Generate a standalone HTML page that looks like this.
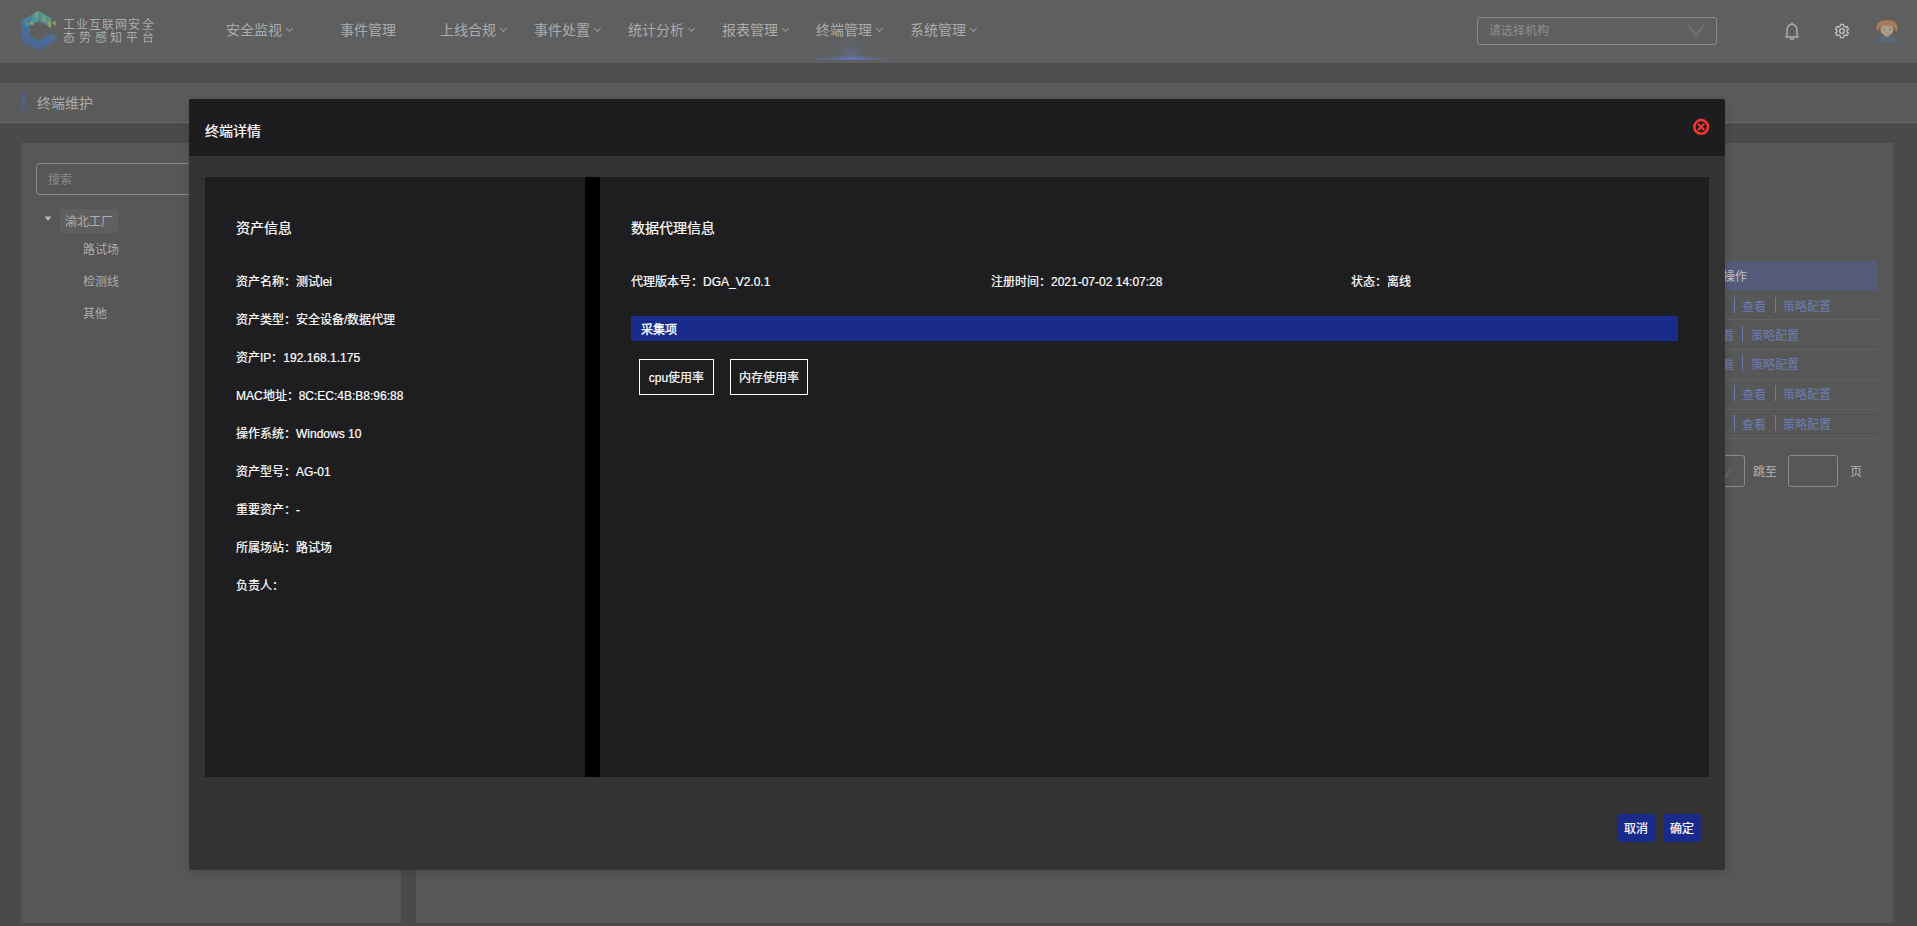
<!DOCTYPE html>
<html lang="zh-CN"><head><meta charset="utf-8">
<style>
*{box-sizing:border-box;margin:0;padding:0}
html,body{width:1917px;height:926px;overflow:hidden}
body{position:relative;background:#4a4a4a;font-family:"Liberation Sans",sans-serif;font-size:12px;color:#fff}
.abs{position:absolute}
.nav{left:0;top:0;width:1917px;height:63px;background:#5f5f5f}
.strip{left:0;top:63px;width:1917px;height:20px;background:#4d4d4d}
.crumb{left:0;top:83px;width:1917px;height:40px;background:#5a5a5a;border-bottom:1px solid #6a6a6a}
.navi{top:20px;font-size:14px;line-height:20px;color:#acacac;white-space:nowrap}
.chev{display:inline-block;width:5px;height:5px;border-right:1px solid #9c9c9c;border-bottom:1px solid #9c9c9c;transform:rotate(45deg);margin-left:5px;position:relative;top:-4px}
.panelL{left:21px;top:143px;width:380px;height:780px;background:#575757}
.panelR{left:416px;top:143px;width:1477px;height:780px;background:#575757}
.modal{left:189px;top:99px;width:1536px;height:771px;background:#333333;border-radius:2px;box-shadow:0 2px 8px rgba(0,0,0,.15)}
.mhead{left:0;top:0;width:1536px;height:57px;background:#1d1d1f;border-radius:2px 2px 0 0}
.inner{left:16px;top:78px;width:1504px;height:600px;background:#1e1e20}
.divider{left:396px;top:78px;width:15px;height:600px;background:#000}
.lbl{white-space:nowrap;line-height:16px;-webkit-text-stroke:0.2px #fff}
.btn{top:715px;width:38px;height:28px;background:#1a2a8a;border-radius:3px;color:#fff;text-align:center;line-height:30px;font-size:12px;-webkit-text-stroke:0.2px #fff}
</style></head>
<body>
<div class="abs nav"></div>
<div class="abs strip"></div>
<div class="abs crumb"></div>
<div class="abs" style="left:21px;top:93px;width:4px;height:18px;background:#565d7e"></div>
<div class="abs" style="left:37px;top:93px;font-size:14px;line-height:20px;color:#acacac">终端维护</div>

<div class="abs panelL"></div>
<div class="abs panelR"></div>

<div class="abs navi" style="left:226px">安全监视<span class="chev"></span></div>
<div class="abs navi" style="left:340px">事件管理</div>
<div class="abs navi" style="left:440px">上线合规<span class="chev"></span></div>
<div class="abs navi" style="left:534px">事件处置<span class="chev"></span></div>
<div class="abs navi" style="left:628px">统计分析<span class="chev"></span></div>
<div class="abs navi" style="left:722px">报表管理<span class="chev"></span></div>
<div class="abs navi" style="left:816px">终端管理<span class="chev"></span></div>
<div class="abs navi" style="left:910px">系统管理<span class="chev"></span></div>


<!-- logo -->
<svg class="abs" style="left:15px;top:5px" width="50" height="50" viewBox="15 5 50 50">
  <defs>
    <linearGradient id="lg" x1="0" y1="1" x2="0.3" y2="0">
      <stop offset="0" stop-color="#4a6392"/><stop offset="0.55" stop-color="#4a6e96"/><stop offset="1" stop-color="#4f8c96"/>
    </linearGradient>
  </defs>
  <path d="M38.2 10.9 L50.9 18 L50.9 27.7 L38.2 21.2 L30.1 25.5 L30.1 35.8 L38.2 40.6 L51.7 33.6 L55.8 36.9 L55.8 40.6 L38.2 50.6 L21.2 40.6 L21.2 20.7 Z" fill="url(#lg)"/>
  <path d="M38.2 10.9 L44.5 14.5 L41 20 Z M34 13.3 L38.2 21.2 L30.1 25.5 Z M44.5 14.5 L50.9 18 L47 24 Z M24 19 L30.1 25.5 L25.5 27 Z" fill="#4f9a9a" opacity=".75"/>
  <path d="M41 20 L44.5 14.5 L47 24 Z M47 24 L50.9 18 L50.9 27.7 Z M34 13.3 L38.2 10.9 L38.2 21.2 Z M31.5 20.5 L34 25 L28.5 24 Z" fill="#8ea664" opacity=".8"/>
  <path d="M51 23.2 L55.8 20.6 L55.8 25.8 Z M48 27 L51 23.2 L51.5 28 Z" fill="#8ea664" opacity=".85"/>
</svg>
<div class="abs" style="left:63px;top:17px;font-size:12px;line-height:16px;color:#ababab;letter-spacing:1.1px;white-space:nowrap">工业互联网安全</div>
<div class="abs" style="left:63px;top:30px;font-size:12px;line-height:16px;color:#ababab;letter-spacing:3.8px;white-space:nowrap">态势感知平台</div>
<!-- active glow -->
<div class="abs" style="left:806px;top:56px;width:90px;height:5px;background:radial-gradient(50% 50% at 50% 50%,rgba(100,130,220,.75) 0%,rgba(95,125,210,.4) 45%,rgba(95,125,210,0) 100%)"></div>
<div class="abs" style="left:834px;top:34px;width:34px;height:25px;background:radial-gradient(50% 100% at 50% 100%,rgba(100,130,210,.35) 0%,rgba(100,130,210,.12) 50%,rgba(100,130,210,0) 100%)"></div>
<div class="abs" style="left:993px;top:18px;width:1px;height:25px;background:#646464"></div>
<!-- select -->
<div class="abs" style="left:1477px;top:17px;width:240px;height:28px;border:1px solid #8a8a8a;border-radius:3px"></div>
<div class="abs" style="left:1489px;top:23px;font-size:12px;line-height:16px;color:#8e8e8e">请选择机构</div>
<svg class="abs" style="left:1687px;top:24px" width="18" height="13" viewBox="1687 24 18 13"><path d="M1688.6 25.4 L1696 35.6 L1703.4 25.4" fill="none" stroke="#7a7a7a" stroke-width="1.4"/></svg>
<!-- bell -->
<svg class="abs" style="left:1784px;top:21px" width="16" height="20" viewBox="0 0 16 20">
  <path d="M8 1.2 V3" stroke="#a8a8a8" stroke-width="1.6" fill="none"/>
  <path d="M3 15.5 V9 C3 5.8 5.2 3.3 8 3.3 C10.8 3.3 13 5.8 13 9 V15.5" stroke="#a8a8a8" stroke-width="1.6" fill="none"/>
  <path d="M1 16 H15" stroke="#a8a8a8" stroke-width="1.6"/>
  <path d="M6.2 16.5 A1.8 1.8 0 0 0 9.8 16.5" stroke="#a8a8a8" stroke-width="1.5" fill="none"/>
</svg>
<!-- gear -->
<svg class="abs" style="left:1834px;top:23px" width="16" height="16" viewBox="0 0 24 24">
  <path fill="none" stroke="#bdbdbd" stroke-width="2.1" stroke-linejoin="round" d="M14.60 4.86 L14.29 2.06 L9.71 2.06 L9.40 4.86 L7.11 6.18 L4.54 5.04 L2.25 9.02 L4.52 10.68 L4.52 13.32 L2.25 14.98 L4.54 18.96 L7.11 17.82 L9.40 19.14 L9.71 21.94 L14.29 21.94 L14.60 19.14 L16.89 17.82 L19.46 18.96 L21.75 14.98 L19.48 13.32 L19.48 10.68 L21.75 9.02 L19.46 5.04 L16.89 6.18 Z"/>
  <circle cx="12" cy="12" r="3.6" fill="none" stroke="#bdbdbd" stroke-width="2.1"/>
</svg>
<!-- avatar -->
<svg class="abs" style="left:1875px;top:19px" width="24" height="24" viewBox="0 0 24 24">
  <path d="M2.5 23.5 C2.5 18.5 5.5 16.3 12 16.3 C18.5 16.3 21.5 18.5 21.5 23.5 Z" fill="#5a6977"/>
  <path d="M9 16.5 Q12 19.5 15 16.5 Z" fill="#b3805e"/>
  <rect x="10" y="13" width="4" height="4" fill="#a89a84"/>
  <ellipse cx="12" cy="10.8" rx="6.6" ry="5.6" fill="#ab9d86"/>
  <path d="M1.5 10.5 C0.8 5 4 1 12 1 C20 1 23.2 5 22.5 10.5 C22.2 12 21 13 20.3 11 C20 8.2 18 6.8 12 6.8 C6 6.8 4 8.2 3.7 11 C3 13 1.8 12 1.5 10.5 Z" fill="#a67b5e"/>
  <rect x="8" y="10" width="2" height="1" fill="#7d6e5e"/><rect x="14" y="10" width="2" height="1" fill="#7d6e5e"/>
  <rect x="10.5" y="13.3" width="3" height="0.8" fill="#b08870"/>
</svg>
<!-- search + tree -->
<div class="abs" style="left:36px;top:163px;width:400px;height:32px;border:1px solid #8a8a8a;border-radius:4px"></div>
<div class="abs" style="left:48px;top:172px;font-size:12px;line-height:16px;color:#8a8a8a">搜索</div>
<svg class="abs" style="left:44px;top:216px" width="8" height="6" viewBox="0 0 8 6"><path d="M0.6 0.6 H7.4 L4 5 Z" fill="#bdbdbd"/></svg>
<div class="abs" style="left:60px;top:209px;width:58px;height:24px;background:#5f5f5f;border-radius:2px"></div>
<div class="abs" style="left:65px;top:214px;font-size:12px;line-height:16px;color:#acacac">渝北工厂</div>
<div class="abs" style="left:83px;top:242px;font-size:12px;line-height:16px;color:#acacac">路试场</div>
<div class="abs" style="left:83px;top:274px;font-size:12px;line-height:16px;color:#acacac">检测线</div>
<div class="abs" style="left:83px;top:306px;font-size:12px;line-height:16px;color:#acacac">其他</div>
<!-- table remnant -->
<div class="abs" style="left:1700px;top:261px;width:1178px;height:29px;background:#545b7b;border-radius:3px 3px 0 0;left:1700px;width:178px"></div>
<div class="abs" style="left:1723px;top:269px;font-size:12px;line-height:16px;color:#c0c0c0">操作</div>

<div class="abs" style="left:1734px;top:297px;width:1px;height:16px;background:#6b7cb5"></div><div class="abs" style="left:1742px;top:299px;font-size:12px;line-height:16px;color:#6b7cb5">查看</div><div class="abs" style="left:1775px;top:297px;width:1px;height:16px;background:#6b7cb5"></div><div class="abs" style="left:1783px;top:299px;font-size:12px;line-height:16px;color:#6b7cb5">策略配置</div>
<div class="abs" style="left:1722px;top:328px;font-size:12px;line-height:16px;color:#6b7cb5">看</div><div class="abs" style="left:1742px;top:326px;width:1px;height:16px;background:#6b7cb5"></div><div class="abs" style="left:1751px;top:328px;font-size:12px;line-height:16px;color:#6b7cb5">策略配置</div>
<div class="abs" style="left:1722px;top:357px;font-size:12px;line-height:16px;color:#6b7cb5">看</div><div class="abs" style="left:1742px;top:355px;width:1px;height:16px;background:#6b7cb5"></div><div class="abs" style="left:1751px;top:357px;font-size:12px;line-height:16px;color:#6b7cb5">策略配置</div>
<div class="abs" style="left:1734px;top:385px;width:1px;height:16px;background:#6b7cb5"></div><div class="abs" style="left:1742px;top:387px;font-size:12px;line-height:16px;color:#6b7cb5">查看</div><div class="abs" style="left:1775px;top:385px;width:1px;height:16px;background:#6b7cb5"></div><div class="abs" style="left:1783px;top:387px;font-size:12px;line-height:16px;color:#6b7cb5">策略配置</div>
<div class="abs" style="left:1734px;top:415px;width:1px;height:16px;background:#6b7cb5"></div><div class="abs" style="left:1742px;top:417px;font-size:12px;line-height:16px;color:#6b7cb5">查看</div><div class="abs" style="left:1775px;top:415px;width:1px;height:16px;background:#6b7cb5"></div><div class="abs" style="left:1783px;top:417px;font-size:12px;line-height:16px;color:#6b7cb5">策略配置</div>
<div class="abs" style="left:1700px;top:319px;width:178px;height:1px;background:#626262"></div><div class="abs" style="left:1700px;top:349px;width:178px;height:1px;background:#626262"></div><div class="abs" style="left:1700px;top:379px;width:178px;height:1px;background:#626262"></div><div class="abs" style="left:1700px;top:409px;width:178px;height:1px;background:#626262"></div><div class="abs" style="left:1700px;top:438px;width:178px;height:1px;background:#626262"></div>
<div class="abs" style="left:1700px;top:455px;width:45px;height:32px;border:1px solid #8a8a8a;border-radius:3px"></div>
<svg class="abs" style="left:1724px;top:468px" width="8" height="10" viewBox="0 0 8 10"><path d="M1 9.5 L7 0.5" stroke="#7a7a7a" stroke-width="1"/></svg>
<div class="abs" style="left:1753px;top:464px;font-size:12px;line-height:16px;color:#b4b4b4">跳至</div>
<div class="abs" style="left:1788px;top:455px;width:50px;height:32px;border:1px solid #8a8a8a;border-radius:3px"></div>
<div class="abs" style="left:1850px;top:464px;font-size:12px;line-height:16px;color:#b4b4b4">页</div>

<div class="abs modal">
  <div class="abs mhead"></div>
  <div class="abs lbl" style="left:16px;top:23px;font-size:14px;line-height:18px">终端详情</div>
  <div class="abs inner"></div>
  <div class="abs divider"></div>
  
  <svg class="abs" style="left:1503px;top:19px" width="18" height="18" viewBox="0 0 18 18">
    <circle cx="9.2" cy="8.9" r="6.85" fill="none" stroke="#f4372f" stroke-width="2.5"/>
    <path d="M6.1 5.8 L12.3 12 M12.3 5.8 L6.1 12" stroke="#f4372f" stroke-width="2.3" stroke-linecap="butt"/>
  </svg>
  <div class="abs lbl" style="left:47px;top:120px;font-size:14px;line-height:18px">资产信息</div>
  <div class="abs lbl" style="left:47px;top:175px">资产名称：测试lei</div>
  <div class="abs lbl" style="left:47px;top:213px">资产类型：安全设备/数据代理</div>
  <div class="abs lbl" style="left:47px;top:251px">资产IP：192.168.1.175</div>
  <div class="abs lbl" style="left:47px;top:289px">MAC地址：8C:EC:4B:B8:96:88</div>
  <div class="abs lbl" style="left:47px;top:327px">操作系统：Windows 10</div>
  <div class="abs lbl" style="left:47px;top:365px">资产型号：AG-01</div>
  <div class="abs lbl" style="left:47px;top:403px">重要资产：-</div>
  <div class="abs lbl" style="left:47px;top:441px">所属场站：路试场</div>
  <div class="abs lbl" style="left:47px;top:479px">负责人：</div>

  <div class="abs lbl" style="left:442px;top:120px;font-size:14px;line-height:18px">数据代理信息</div>
  <div class="abs lbl" style="left:442px;top:175px">代理版本号：DGA_V2.0.1</div>
  <div class="abs lbl" style="left:802px;top:175px">注册时间：2021-07-02 14:07:28</div>
  <div class="abs lbl" style="left:1162px;top:175px">状态：离线</div>
  <div class="abs" style="left:442px;top:217px;width:1047px;height:25px;background:#192c8c"></div>
  <div class="abs lbl" style="left:452px;top:223px;-webkit-text-stroke:0.35px #fff">采集项</div>
  <div class="abs lbl" style="left:450px;top:260px;width:75px;height:36px;border:1px solid #fff;line-height:37px;text-align:center">cpu使用率</div>
  <div class="abs lbl" style="left:541px;top:260px;width:78px;height:36px;border:1px solid #fff;line-height:37px;text-align:center">内存使用率</div>
  <div class="abs btn" style="left:1428px">取消</div>
  <div class="abs btn" style="left:1474px">确定</div>
</div>
</body></html>
